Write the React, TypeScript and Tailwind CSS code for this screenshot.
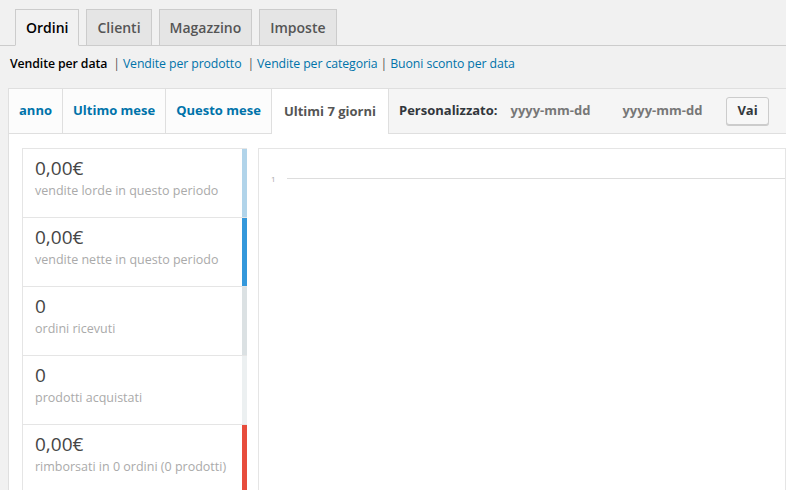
export default function App() {
  const cards = [
    { v: "0,00€", l: "vendite lorde in questo periodo", c: "bg-[#b1d4ea]" },
    { v: "0,00€", l: "vendite nette in questo periodo", c: "bg-[#3498db]" },
    { v: "0", l: "ordini ricevuti", c: "bg-[#dbe1e3]" },
    { v: "0", l: "prodotti acquistati", c: "bg-[#ecf0f1]" },
    { v: "0,00€", l: "rimborsati in 0 ordini (0 prodotti)", c: "bg-[#e74c3c]" },
  ];
  return (
    <div className="w-[786px] h-[490px] overflow-hidden bg-[#f1f1f1] text-[#23282d]" style={{ fontFamily: '"Open Sans", sans-serif' }}>
      <div className="flex items-end gap-[7px] pl-[15px] pt-[9px] border-b border-[#ccc] h-[46px]">
        <div className="h-[37px] px-[10px] flex items-center border border-[#ccc] border-b-[#f1f1f1] -mb-px bg-[#f1f1f1] text-[14px] font-semibold text-black">Ordini</div>
        <div className="h-[36px] px-[10px] flex items-center border border-[#ccc] border-b-0 bg-[#e5e5e5] text-[14px] font-semibold text-[#555]">Clienti</div>
        <div className="h-[36px] px-[10px] flex items-center border border-[#ccc] border-b-0 bg-[#e5e5e5] text-[14px] font-semibold text-[#555]">Magazzino</div>
        <div className="h-[36px] px-[10px] flex items-center border border-[#ccc] border-b-0 bg-[#e5e5e5] text-[14px] font-semibold text-[#555]">Imposte</div>
      </div>
      <div className="pl-[10px] pt-[9px] text-[12.3px] flex gap-[3px] h-[42px] tracking-[-0.1px]">
        <span className="font-semibold text-black mr-[3px]">Vendite per data</span>
        <span className="text-[#555]">|</span><span className="text-[#0073aa] mr-[3px]">Vendite per prodotto</span>
        <span className="text-[#555]">|</span><span className="text-[#0073aa]">Vendite per categoria</span>
        <span className="text-[#555]">|</span><span className="text-[#0073aa]">Buoni sconto per data</span>
      </div>
      <div className="ml-[8px] bg-white border-l border-[#dfdfdf] h-[500px]">
        <div className="flex h-[46px] bg-[#fcfcfc] border-t border-[#dfdfdf] text-[13px] font-bold">
          <div className="px-[10px] flex items-center text-[#0073aa] border-r border-b border-[#dfdfdf]">anno</div>
          <div className="px-[10px] flex items-center text-[#0073aa] border-r border-b border-[#dfdfdf]">Ultimo mese</div>
          <div className="px-[10px] flex items-center text-[#0073aa] border-r border-b border-[#dfdfdf]">Questo mese</div>
          <div className="px-[12px] flex items-center text-[#555] bg-white border-r border-[#dfdfdf]">Ultimi 7 giorni</div>
          <div className="flex-1 flex items-center bg-[#f5f5f5] border-b border-[#dfdfdf] pl-[10px]">
            <span className="text-[#32373c]">Personalizzato:</span>
            <span className="ml-[13px] text-[#777]">yyyy-mm-dd</span>
            <span className="ml-[32px] text-[#777]">yyyy-mm-dd</span>
            <span className="ml-[24px] px-[10px] h-[28px] flex items-center border border-[#ccc] rounded-[3px] bg-[#f7f7f7] text-[#32373c] shadow-[0_1px_0_#ccc]">Vai</span>
          </div>
        </div>
        <div className="flex pt-[14px] pl-[13px] gap-[11px]">
          <div className="w-[225px] bg-white border border-[#e5e5e5] border-r-0 flex flex-col">
            {cards.map((c, i) => (
              <div key={i} className="flex h-[69px] border-b border-[#e5e5e5]">
                <div className="flex-1 pl-[12px] pt-[6px]">
                  <div className="text-[19px] text-[#464646] leading-[26px]">{c.v}</div>
                  <div className="text-[12.5px] text-[#aaa] leading-[20px]">{c.l}</div>
                </div>
                <div className={`w-[5px] ${c.c}`} />
              </div>
            ))}
          </div>
          <div className="flex-1 border border-[#e5e5e5] h-[400px] relative">
            <div className="absolute left-[12px] top-[24px] text-[8px] text-[#aaa]">1</div>
            <div className="absolute left-[28px] right-0 top-[29px] border-t border-[#ddd]" />
          </div>
        </div>
      </div>
    </div>
  );
}
